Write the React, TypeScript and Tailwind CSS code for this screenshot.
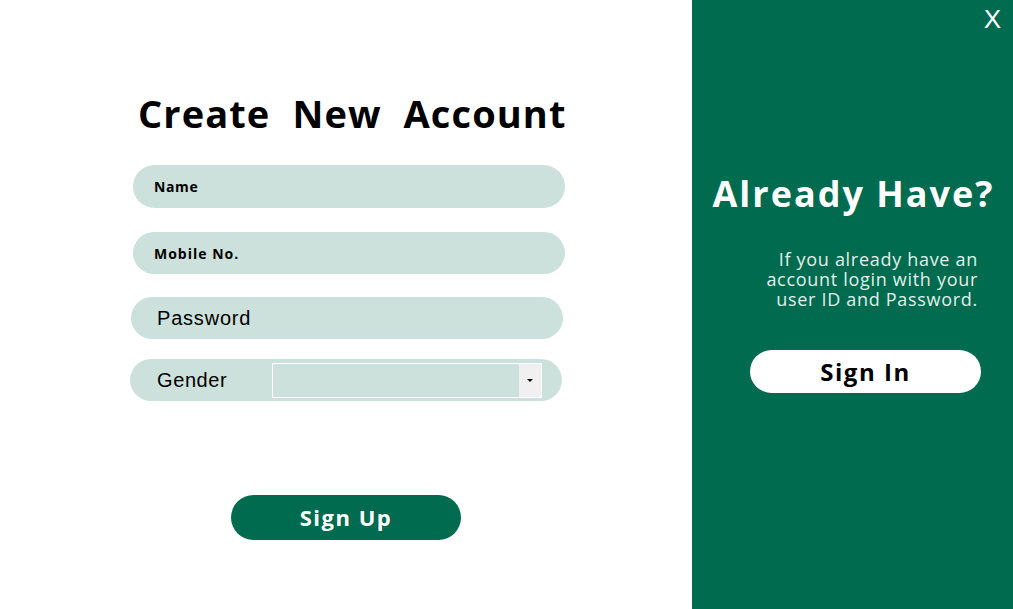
import { useState } from 'react';

export default function App() {
  const [gender, setGender] = useState('');

  return (
    <div className="flex w-[1013px] h-[609px] overflow-hidden bg-white">
      {/* left: sign up form */}
      <div className="w-[692px] h-full bg-white pt-[90px]">
        <h1 className="ml-[138px] text-[38px] leading-[46px] font-bold text-black tracking-[1.1px] [word-spacing:11px] font-['Open_Sans',sans-serif]">
          Create New Account
        </h1>

        <div className="mt-[29px] ml-[133px] w-[432px] h-[43px] rounded-full bg-[#cce1db] flex items-center pl-[21px]">
          <span className="text-[14px] font-bold text-black tracking-[0.6px] font-['Open_Sans',sans-serif]">Name</span>
        </div>

        <div className="mt-[24px] ml-[133px] w-[432px] h-[42px] rounded-full bg-[#cce1db] flex items-center pl-[21px]">
          <span className="text-[14px] font-bold text-black tracking-[1px] font-['Open_Sans',sans-serif]">Mobile No.</span>
        </div>

        <div className="mt-[23px] ml-[131px] w-[432px] h-[42px] rounded-full bg-[#cce1db] flex items-center pl-[26px]">
          <span className="text-[20px] text-black tracking-[0.8px] font-['Liberation_Sans',Arial,sans-serif]">Password</span>
        </div>

        <div className="mt-[20px] ml-[130px] w-[432px] h-[42px] rounded-full bg-[#cce1db] flex items-center pl-[27px]">
          <span className="w-[115px] text-[20px] text-black tracking-[0.6px] font-['Liberation_Sans',Arial,sans-serif]">Gender</span>
          <div className="flex w-[270px] h-[35px] border border-white">
            <select
              value={gender}
              onChange={e => setGender(e.target.value)}
              className="flex-1 bg-[#cce1db] appearance-none outline-none text-[14px] px-1 font-['Liberation_Sans',Arial,sans-serif]"
            >
              <option value=""></option>
              <option value="male">Male</option>
              <option value="female">Female</option>
            </select>
            <div className="w-[22px] bg-[#f0f0f0] flex items-center justify-center">
              <svg width="6" height="3" viewBox="0 0 6 3">
                <path d="M0 0h6L3 3z" fill="#000" />
              </svg>
            </div>
          </div>
        </div>

        <button className="block mt-[94px] ml-[231px] w-[230px] h-[45px] rounded-full bg-[#006b4f] text-white text-[22px] font-bold tracking-[1.5px] font-['Open_Sans',sans-serif]">
          Sign Up
        </button>
      </div>

      {/* right: sign in panel */}
      <div className="relative w-[321px] h-full bg-[#006b4f] pt-[170px]">
        <button className="absolute top-[6px] right-[12px] text-white text-[26px] leading-none font-['Liberation_Sans',Arial,sans-serif]">
          X
        </button>
        <h2 className="text-center pl-[2px] text-[36px] leading-[48px] font-bold text-white tracking-[2px] font-['Open_Sans',sans-serif]">
          Already Have?
        </h2>
        <p className="mt-[31px] pr-[35px] text-right text-[18px] leading-[20px] tracking-[0.7px] text-[#e3efea] font-['Open_Sans',sans-serif]">
          If you already have an
          <br />
          account login with your
          <br />
          user ID and Password.
        </p>
        <button className="block mt-[41px] ml-[58px] w-[231px] h-[43px] rounded-full bg-white text-black text-[24px] font-bold tracking-[1.5px] font-['Open_Sans',sans-serif]">
          Sign In
        </button>
      </div>
    </div>
  );
}
